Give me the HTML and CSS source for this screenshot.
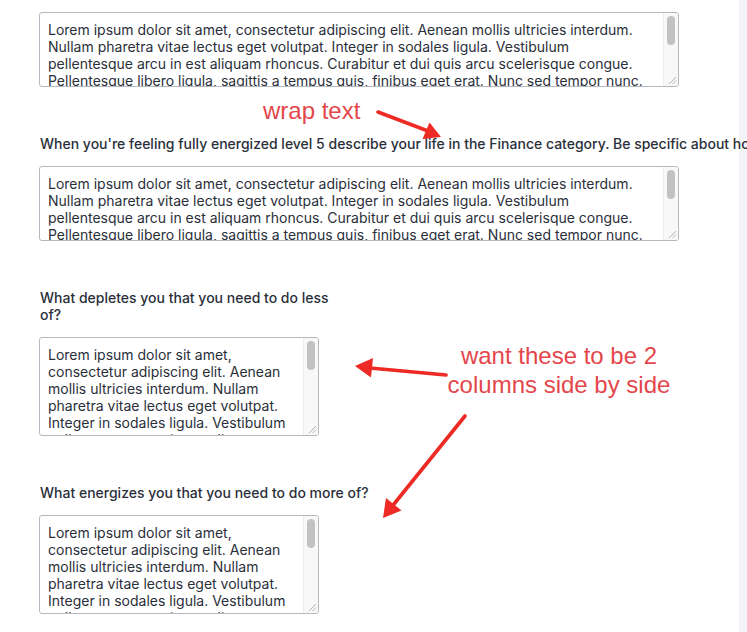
FILE: index.html
```html
<!DOCTYPE html>
<html lang="en">
<head>
<meta charset="utf-8">
<title>Journal form</title>
<link rel="stylesheet" href="styles.css">
</head>
<body>
<main class="page">
  <form class="form">
    <div class="field">
      <div class="box-wrap">
        <textarea class="box box-wide">Lorem ipsum dolor sit amet, consectetur adipiscing elit. Aenean mollis ultricies interdum. Nullam pharetra vitae lectus eget volutpat. Integer in sodales ligula. Vestibulum pellentesque arcu in est aliquam rhoncus. Curabitur et dui quis arcu scelerisque congue. Pellentesque libero ligula, sagittis a tempus quis, finibus eget erat. Nunc sed tempor nunc. Donec vel sem vitae purus porttitor tincidunt. Sed non nisl sed mauris mollis luctus. Aliquam erat volutpat. Phasellus in elit ac nunc faucibus fermentum.</textarea>
        <span class="track"><span class="thumb"></span><svg class="grip" width="9" height="9" viewBox="0 0 9 9"><path d="M1 8 L8 1 M4.5 8 L8 4.5" stroke="#b3b3b3" stroke-width="1"/></svg></span>
      </div>
    </div>

    <div class="field field-gap">
      <label class="label label-nowrap">When you're feeling fully energized level 5 describe your life in the Finance category. Be specific about how you feel, what you do and what you have.</label>
      <div class="box-wrap">
        <textarea class="box box-wide">Lorem ipsum dolor sit amet, consectetur adipiscing elit. Aenean mollis ultricies interdum. Nullam pharetra vitae lectus eget volutpat. Integer in sodales ligula. Vestibulum pellentesque arcu in est aliquam rhoncus. Curabitur et dui quis arcu scelerisque congue. Pellentesque libero ligula, sagittis a tempus quis, finibus eget erat. Nunc sed tempor nunc. Donec vel sem vitae purus porttitor tincidunt. Sed non nisl sed mauris mollis luctus. Aliquam erat volutpat. Phasellus in elit ac nunc faucibus fermentum.</textarea>
        <span class="track"><span class="thumb"></span><svg class="grip" width="9" height="9" viewBox="0 0 9 9"><path d="M1 8 L8 1 M4.5 8 L8 4.5" stroke="#b3b3b3" stroke-width="1"/></svg></span>
      </div>
    </div>

    <div class="field field-gap">
      <label class="label label-narrow">What depletes you that you need to do less of?</label>
      <div class="box-wrap">
        <textarea class="box box-small">Lorem ipsum dolor sit amet, consectetur adipiscing elit. Aenean mollis ultricies interdum. Nullam pharetra vitae lectus eget volutpat. Integer in sodales ligula. Vestibulum pellentesque arcu in est aliquam rhoncus. Curabitur et dui quis arcu scelerisque congue. Pellentesque libero ligula, sagittis a tempus quis, finibus eget erat. Nunc sed tempor nunc.</textarea>
        <span class="track"><span class="thumb"></span><svg class="grip" width="9" height="9" viewBox="0 0 9 9"><path d="M1 8 L8 1 M4.5 8 L8 4.5" stroke="#b3b3b3" stroke-width="1"/></svg></span>
      </div>
    </div>

    <div class="field field-gap">
      <label class="label">What energizes you that you need to do more of?</label>
      <div class="box-wrap">
        <textarea class="box box-small">Lorem ipsum dolor sit amet, consectetur adipiscing elit. Aenean mollis ultricies interdum. Nullam pharetra vitae lectus eget volutpat. Integer in sodales ligula. Vestibulum pellentesque arcu in est aliquam rhoncus. Curabitur et dui quis arcu scelerisque congue. Pellentesque libero ligula, sagittis a tempus quis, finibus eget erat. Nunc sed tempor nunc.</textarea>
        <span class="track"><span class="thumb"></span><svg class="grip" width="9" height="9" viewBox="0 0 9 9"><path d="M1 8 L8 1 M4.5 8 L8 4.5" stroke="#b3b3b3" stroke-width="1"/></svg></span>
      </div>
    </div>
  </form>

  <div class="note note-wrap">wrap text</div>
  <div class="note note-cols">want these to be 2<br>columns side by side</div>

  <svg class="arrows" width="747" height="632" viewBox="0 0 747 632" aria-hidden="true">
    <g stroke="#ee2a24" stroke-width="3.6" stroke-linecap="round" fill="none">
      <line x1="378" y1="112" x2="428" y2="131"/>
      <line x1="446" y1="375" x2="370" y2="368"/>
      <line x1="465" y1="416" x2="394" y2="504"/>
    </g>
    <g fill="#ee2a24">
      <polygon points="441,137 422.5,139 429.5,122.5"/>
      <polygon points="355,366 373,358 371,377.5"/>
      <polygon points="383,518 386,498 401.5,510.5"/>
    </g>
  </svg>
</main>
</body>
</html>
```

FILE: styles.css
```css
html, body {
  margin: 0;
  padding: 0;
}

body {
  width: 747px;
  height: 632px;
  overflow: hidden;
  background: linear-gradient(to right, #ffffff 739px, #f4f5f9 739px);
  font-family: Inter, "Noto Sans", sans-serif;
  color: #2a2f3a;
}

.page {
  position: relative;
  width: 747px;
  height: 632px;
  overflow: hidden;
}

.form {
  display: flex;
  flex-direction: column;
  padding: 12px 0 0 39px;
}

.field {
  display: flex;
  flex-direction: column;
  align-items: flex-start;
}

.field-gap {
  margin-top: 48px;
}

.label {
  display: block;
  margin: 0 0 14px 1px;
  font-size: 14px;
  line-height: 17px;
  font-weight: 500;
  color: #2a2f3a;
}

.label-nowrap {
  white-space: nowrap;
}

.label-narrow {
  width: 305px;
}

.box-wrap {
  position: relative;
  display: block;
}

.box {
  display: block;
  box-sizing: border-box;
  margin: 0;
  padding: 8px 23px 8px 8px;
  border: 1px solid #b4b8c0;
  border-radius: 3px;
  background: #ffffff;
  font-family: Inter, "Noto Sans", sans-serif;
  font-size: 14px;
  line-height: 17px;
  color: #2a2f3a;
  overflow: hidden;
  resize: none;
}

.box-wide {
  width: 640px;
  height: 75px;
  padding-right: 30px;
}

.box-small {
  width: 280px;
  height: 99px;
}

.track {
  position: absolute;
  top: 1px;
  right: 1px;
  bottom: 1px;
  width: 14px;
  background: #f8f8f8;
  border-left: 1px solid #ececec;
  border-radius: 0 2px 2px 0;
}

.thumb {
  position: absolute;
  top: 3px;
  left: 3px;
  width: 8px;
  height: 29px;
  border-radius: 4px;
  background: #c2c2c2;
}

.grip {
  position: absolute;
  right: 1px;
  bottom: 1px;
}

.note {
  position: absolute;
  font-family: "Liberation Sans", Arial, sans-serif;
  font-size: 24px;
  line-height: 29px;
  color: #e4464b;
  white-space: nowrap;
}

.note-wrap {
  left: 263px;
  top: 96px;
}

.note-cols {
  left: 409px;
  top: 341px;
  width: 300px;
  text-align: center;
}

.arrows {
  position: absolute;
  left: 0;
  top: 0;
  pointer-events: none;
}
```
